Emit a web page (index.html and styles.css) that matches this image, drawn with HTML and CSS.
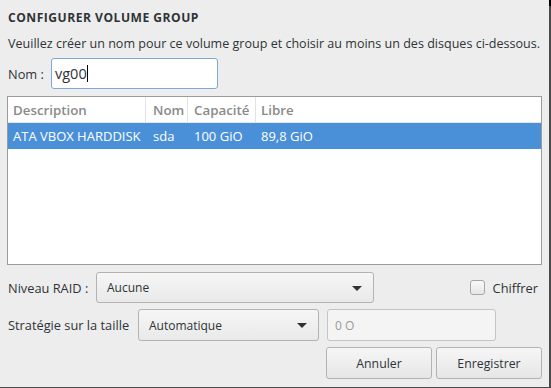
FILE: index.html
```html
<!DOCTYPE html>
<html lang="fr">
<head>
    <meta charset="UTF-8">
    <title>Configurer volume group</title>
    <link rel="stylesheet" href="styles.css">
</head>
<body>
    <div class="dialog">
        <h1>CONFIGURER VOLUME GROUP</h1>
        <p class="intro">Veuillez créer un nom pour ce volume group et choisir au moins un des disques ci-dessous.</p>
        <div class="name-row">
            <label for="vgName" class="lbl">Nom :</label>
            <div class="name-input">vg00<span class="caret"></span></div>
        </div>
        <div class="disks">
            <div class="row head">
                <div class="c c-desc">Description</div>
                <div class="c c-nom">Nom</div>
                <div class="c c-cap">Capacité</div>
                <div class="c c-free">Libre</div>
            </div>
            <div class="row selected">
                <div class="c c-desc">ATA VBOX HARDDISK</div>
                <div class="c c-nom">sda</div>
                <div class="c c-cap">100 GiO</div>
                <div class="c c-free">89,8 GiO</div>
            </div>
        </div>
        <div class="raid-row">
            <span class="lbl">Niveau RAID :</span>
            <div class="combo combo-raid">Aucune<span class="arrow"></span></div>
            <label class="check"><span class="box"></span>Chiffrer</label>
        </div>
        <div class="size-row">
            <span class="lbl">Stratégie sur la taille</span>
            <div class="combo combo-size">Automatique<span class="arrow"></span></div>
            <div class="size-input">0 O</div>
        </div>
        <div class="buttons">
            <button class="btn btn-cancel">Annuler</button>
            <button class="btn btn-save">Enregistrer</button>
        </div>
    </div>
</body>
</html>
```

FILE: styles.css
```css
* {
    margin: 0;
    padding: 0;
    box-sizing: border-box;
}
body {
    width: 551px;
    height: 388px;
    background-color: #ededed;
    font-family: "Open Sans", "DejaVu Sans", sans-serif;
    font-size: 12px;
    color: #2e3436;
    overflow: hidden;
}
.dialog {
    position: relative;
    width: 551px;
    height: 388px;
    padding: 10px 10px 0 7px;
    border-right: 2px solid #4a4a4a;
    border-bottom: 1px solid #4a4a4a;
}
.dialog::before {
    content: "";
    position: absolute;
    top: 0;
    right: -2px;
    width: 2px;
    height: 6px;
    background: #000;
}
h1 {
    font-size: 12.1px;
    font-weight: bold;
    letter-spacing: 0.5px;
    line-height: 16px;
    padding-left: 1px;
}
.intro {
    margin-top: 10px;
    font-size: 12.55px;
    line-height: 16px;
    padding-left: 1px;
    white-space: nowrap;
}
.name-row {
    margin-top: 6px;
    display: flex;
    align-items: center;
    height: 31px;
}
.name-row .lbl {
    width: 44px;
}
.name-input {
    width: 167px;
    height: 31px;
    background: #fff;
    border: 1px solid #7ea9d6;
    border-radius: 3px;
    padding-left: 3px;
    font-size: 14.5px;
    display: flex;
    align-items: center;
}
.caret {
    display: inline-block;
    width: 1px;
    height: 17px;
    background: #000;
}
.disks {
    margin-top: 7px;
    width: 535px;
    height: 169px;
    background: #fff;
    border: 1px solid #9b9b9b;
    font-size: 13px;
}
.row {
    display: flex;
    height: 26px;
    align-items: center;
}
.row.head {
    color: #8a8a8a;
    font-weight: 600;
    font-size: 13.3px;
    border-bottom: 1px solid #e6e6e6;
}
.row.head .c {
    border-right: 1px solid #e2e2e2;
}
.row.selected {
    background: #4a90d9;
    color: #fff;
}
.c {
    height: 100%;
    display: flex;
    align-items: center;
    padding-left: 5px;
    white-space: nowrap;
}
.c-desc { width: 138px; }
.c-nom { width: 42px; padding-left: 7px; }
.c-cap { width: 68px; padding-left: 6px; }
.c-free { flex: 1; padding-left: 5px; border-right: none !important; }
.raid-row, .size-row {
    display: flex;
    align-items: center;
    height: 31px;
}
.raid-row {
    margin-top: 7px;
}
.size-row {
    margin-top: 6px;
    height: 32px;
}
.lbl {
    padding-left: 1px;
    white-space: nowrap;
    font-size: 12.8px;
}
.raid-row .lbl { width: 89px; }
.size-row .lbl { width: 131px; }
.combo {
    position: relative;
    height: 100%;
    border: 1px solid #b3b3b3;
    border-radius: 3px;
    background: linear-gradient(#f6f6f6, #e9e9e9);
    padding-left: 10px;
    display: flex;
    align-items: center;
}
.combo-raid { width: 278px; }
.combo-size { width: 181px; }
.arrow {
    position: absolute;
    right: 11px;
    top: 50%;
    margin-top: -2px;
    border-left: 5px solid transparent;
    border-right: 5px solid transparent;
    border-top: 5px solid #2e3436;
}
.check {
    margin-left: auto;
    margin-right: 1px;
    display: flex;
    align-items: center;
    gap: 8px;
    font-size: 12.8px;
}
.box {
    width: 15px;
    height: 15px;
    border: 1px solid #a7a7a7;
    border-radius: 3px;
    background: linear-gradient(#fafafa, #e6e6e6);
}
.size-input {
    margin-left: 8px;
    width: 169px;
    height: 100%;
    border: 1px solid #c4c4c4;
    border-radius: 3px;
    background: #f4f4f4;
    color: #9a9a9a;
    padding-left: 7px;
    display: flex;
    align-items: center;
}
.buttons {
    margin-top: 6px;
    display: flex;
    justify-content: flex-end;
    gap: 4px;
    width: 535px;
}
.btn {
    height: 32px;
    border: 1px solid #b3b3b3;
    border-radius: 3px;
    background: linear-gradient(#f6f6f6, #e6e6e6);
    font-family: inherit;
    font-size: 12.3px;
    color: #2e3436;
}
.btn-cancel { width: 106px; }
.btn-save { width: 106px; }
```
